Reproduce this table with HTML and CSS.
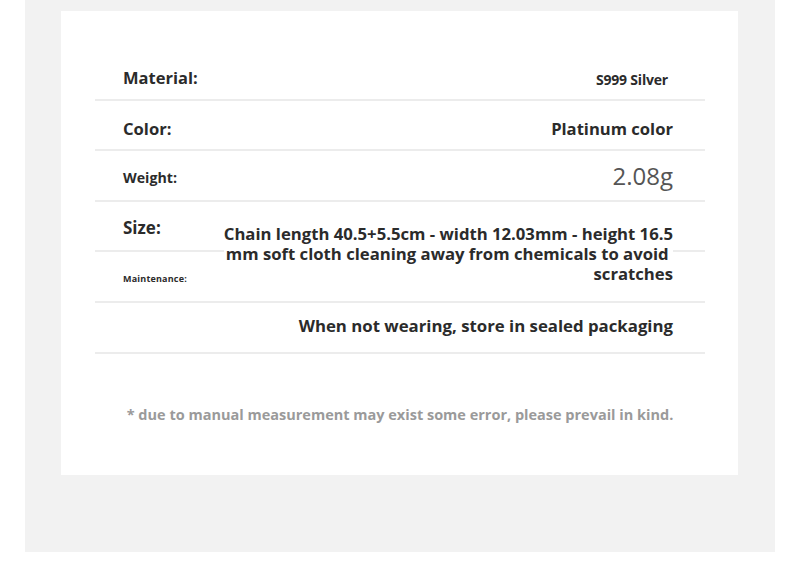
FILE: index.html
```html
<!DOCTYPE html>
<html>
<head>
<meta charset="utf-8">
<link rel="stylesheet" href="styles.css">
</head>
<body>
<div class="panel">
  <div class="card">
    <div class="specs">
      <div class="row r1">
        <span class="label l-material">Material:</span>
        <span class="value v-material">S999 Silver</span>
      </div>
      <div class="row r2">
        <span class="label l-color">Color:</span>
        <span class="value v-color">Platinum color</span>
      </div>
      <div class="row r3">
        <span class="label l-weight">Weight:</span>
        <span class="value v-weight">2.08g</span>
      </div>
      <div class="row r4 row-top">
        <span class="label l-size">Size:</span>
        <span class="value v-size"><span class="line">Chain length 40.5+5.5cm - width 12.03mm - height 16.5</span><span class="line">mm soft cloth cleaning away from chemicals to avoid&nbsp;</span><span class="line">scratches</span></span>
      </div>
      <div class="row r5">
        <span class="label l-maint">Maintenance:</span>
      </div>
      <div class="row r6">
        <span class="value v-store">When not wearing, store in sealed packaging</span>
      </div>
    </div>
    <p class="note">* due to manual measurement may exist some error, please prevail in kind.</p>
  </div>
</div>
</body>
</html>
```

FILE: styles.css
```css
html, body {
  margin: 0;
  padding: 0;
  background: #ffffff;
}

body {
  font-family: "Open Sans", "Noto Sans", sans-serif;
  color: #2b2b2b;
}

.panel {
  margin-left: 25px;
  width: 750px;
  height: 552px;
  background: #f2f2f2;
  padding-top: 11px;
  box-sizing: border-box;
}

.card {
  margin-left: 36px;
  width: 677px;
  height: 464px;
  background: #ffffff;
  padding-top: 39px;
  box-sizing: border-box;
}

.specs {
  margin-left: 34px;
  width: 610px;
}

.row {
  position: relative;
  height: 50.6px;
  box-sizing: border-box;
  border-bottom: 2px solid #ececec;
  display: flex;
  align-items: center;
  justify-content: space-between;
  padding: 3px 32px 0 28px;
}

.r1, .r2 { padding-top: 7px; }
.r3 { padding-top: 5px; }
.r5 { padding-top: 4px; }
.r6 { padding-top: 0; }

.row-top {
  align-items: flex-start;
  padding-top: 0;
}

.label {
  font-weight: 700;
  color: #2b2b2b;
}

.l-material { font-size: 16.5px; }
.l-color { font-size: 16.6px; }
.l-weight { font-size: 14.2px; }
.l-size { font-size: 17px; margin-top: 15px; line-height: 22px; }
.l-maint { font-size: 9px; letter-spacing: 0.2px; }

.value {
  font-weight: 700;
  color: #2b2b2b;
  text-align: right;
  margin-left: auto;
}

.v-material {
  font-size: 14px;
  margin-right: 5px;
  margin-top: 4px;
  letter-spacing: -0.2px;
}
.v-color { font-size: 16.6px; }
.v-weight {
  font-weight: 400;
  font-size: 24px;
  color: #555555;
  margin-bottom: 5px;
}

.v-size {
  position: relative;
  z-index: 1;
  background: #ffffff;
  font-size: 16.7px;
  line-height: 20px;
  margin-top: 22px;
  display: flex;
  flex-direction: column;
  align-items: flex-end;
}

.line {
  display: block;
  height: 20px;
  line-height: 20px;
  white-space: pre;
}

.v-store { font-size: 16.8px; margin-bottom: 4px; }

.note {
  margin: 51px 0 0;
  text-align: center;
  font-size: 14.5px;
  font-weight: 700;
  color: #9a9a9a;
  padding-left: 1px;
}
```
